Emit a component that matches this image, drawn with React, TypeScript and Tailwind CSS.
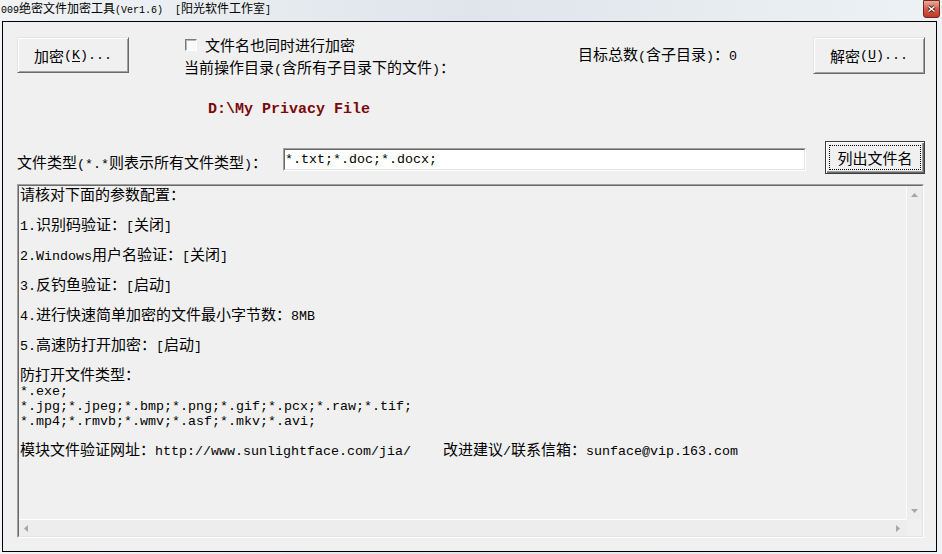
import React from "react";

// mixed CJK / half-width text: ASCII runs get a monospace face sized to half the CJK advance
function Mixed({ text, ascii = "text-[13.33px]" }: { text: string; ascii?: string }) {
  const parts = text.split(/([\x20-\x7e]+)/).filter(Boolean);
  return (
    <>
      {parts.map((p, i) =>
        /^[\x20-\x7e]+$/.test(p) ? (
          <span key={i} className={`font-['Liberation_Mono',monospace] whitespace-pre ${ascii}`}>
            {p}
          </span>
        ) : (
          <span key={i}>{p}</span>
        )
      )}
    </>
  );
}

function RaisedButton({ className, children }: { className: string; children: React.ReactNode }) {
  return (
    <button
      className={`flex items-center justify-center bg-[#f0f0f0] border border-t-[#e3e3e3] border-l-[#e3e3e3] border-r-[#696969] border-b-[#696969] shadow-[inset_1px_1px_0_#ffffff,inset_-1px_-1px_0_#a0a0a0] leading-[15px] text-black ${className}`}
    >
      {children}
    </button>
  );
}

function Sunken({ className, inner, children }: { className: string; inner: string; children: React.ReactNode }) {
  return (
    <div className={`border border-t-[#a0a0a0] border-l-[#a0a0a0] border-r-white border-b-white ${className}`}>
      <div className={`w-full h-full border border-t-[#696969] border-l-[#696969] border-r-[#e3e3e3] border-b-[#e3e3e3] ${inner}`}>
        {children}
      </div>
    </div>
  );
}

function Arrow({ dir }: { dir: "up" | "down" | "left" | "right" }) {
  const pts = {
    up: "0,4 3.5,0 7,4",
    down: "0,0 3.5,4 7,0",
    left: "4,0 0,3.5 4,7",
    right: "0,0 4,3.5 0,7",
  }[dir];
  const vertical = dir === "up" || dir === "down";
  return (
    <svg width={vertical ? 7 : 4} height={vertical ? 4 : 7} viewBox={vertical ? "0 0 7 4" : "0 0 4 7"}>
      <polygon points={pts} fill="#a6a6a6" />
    </svg>
  );
}

const lines = [
  "请核对下面的参数配置：",
  "",
  "1.识别码验证：[关闭]",
  "",
  "2.Windows用户名验证：[关闭]",
  "",
  "3.反钓鱼验证：[启动]",
  "",
  "4.进行快速简单加密的文件最小字节数：8MB",
  "",
  "5.高速防打开加密：[启动]",
  "",
  "防打开文件类型：",
  "*.exe;",
  "*.jpg;*.jpeg;*.bmp;*.png;*.gif;*.pcx;*.raw;*.tif;",
  "*.mp4;*.rmvb;*.wmv;*.asf;*.mkv;*.avi;",
  "",
  "模块文件验证网址：http://www.sunlightface.com/jia/    改进建议/联系信箱：sunface@vip.163.com",
];

export default function App() {
  return (
    <div className="w-[942px] h-[554px] overflow-hidden flex flex-col bg-linear-to-r from-[#f1f3f6] via-[#dfe5eb] to-[#eef2f5] font-['Noto_Sans_CJK_SC',sans-serif] text-[15px] text-black">
      {/* title bar */}
      <div className="h-[21px] flex items-start">
        <div className="ml-[1px] mt-[2px] text-[12px] leading-[12px]">
          <Mixed text="009绝密文件加密工具(Ver1.6)  [阳光软件工作室]" ascii="text-[10px]" />
        </div>
        <div className="ml-auto mr-[2px] w-[17px] h-[18px] rounded-b-[3px] border border-[#6d2a20] bg-linear-to-b from-[#eba99a] via-[#d45b45] to-[#c0392b] flex items-center justify-center">
          <svg width="9" height="8" viewBox="0 0 9 8">
            <path d="M1.5 1.5 L7.5 6.5 M7.5 1.5 L1.5 6.5" stroke="#4a1a12" strokeWidth="3" />
            <path d="M1.5 1.5 L7.5 6.5 M7.5 1.5 L1.5 6.5" stroke="#ffffff" strokeWidth="1.5" />
          </svg>
        </div>
      </div>

      {/* client area */}
      <div className="ml-[2px] w-[935px] h-[531px] border border-black bg-[#f0f0f0] pl-[14px] pt-[15px]">
        <div className="flex items-start">
          <RaisedButton className="w-[112px] h-[36px]">
            <Mixed text="加密(" />
            <span className="font-['Liberation_Mono',monospace] text-[13.33px] underline underline-offset-2">K</span>
            <Mixed text=")..." />
          </RaisedButton>

          <div className="ml-[55px] w-[394px] flex flex-col">
            <div className="h-[15px] flex items-center">
              <span className="ml-[1px] w-[12px] h-[12px] border border-t-[#7a7a7a] border-l-[#7a7a7a] border-r-white border-b-white bg-[#fafafa] shadow-[inset_1px_1px_0_#b8b8b8]" />
              <span className="ml-[8px] leading-[15px]">文件名也同时进行加密</span>
            </div>
            <div className="mt-[7px] h-[15px] leading-[15px] whitespace-nowrap">
              <Mixed text="当前操作目录(含所有子目录下的文件)：" />
            </div>
          </div>

          <div className="mt-[9px] w-[235px] h-[15px] leading-[15px] whitespace-nowrap">
            <Mixed text="目标总数(含子目录)：0" />
          </div>

          <RaisedButton className="w-[112px] h-[37px]">
            <Mixed text="解密(" />
            <span className="font-['Liberation_Mono',monospace] text-[13.33px] underline underline-offset-2">U</span>
            <Mixed text=")..." />
          </RaisedButton>
        </div>

        <div className="ml-[191px] mt-[28px] h-[16px] leading-[16px] font-['Liberation_Mono',monospace] font-bold text-[15px] text-[#7a0a0a]">
          {"D:\\My Privacy File"}
        </div>

        <div className="mt-[23px] flex items-start">
          <div className="mt-[13px] w-[266px] h-[15px] leading-[15px] whitespace-nowrap">
            <Mixed text="文件类型(*.*则表示所有文件类型)：" />
          </div>
          <Sunken className="mt-[7px] w-[523px] h-[23px]" inner="bg-white flex items-center">
            <span className="font-['Liberation_Mono',monospace] text-[13.33px] leading-[15px]">*.txt;*.doc;*.docx;</span>
          </Sunken>
          <button className="ml-[19px] w-[100px] h-[33px] flex items-center justify-center bg-[#f0f0f0] border border-[#3c3c3c] shadow-[inset_1px_1px_0_#ffffff,inset_-1px_-1px_0_#696969,inset_-2px_-2px_0_#a0a0a0] outline-1 outline-dotted outline-black outline-offset-[-5px] leading-[15px]">
            列出文件名
          </button>
        </div>

        <Sunken className="mt-[10px] w-[907px] h-[354px]" inner="flex flex-col bg-[#f0f0f0]">
          <div className="h-[333px] flex">
            <div className="flex-1 pl-[1px]">
              {lines.map((l, i) => (
                <div key={i} className="h-[15px] leading-[15px] whitespace-pre">
                  <Mixed text={l} />
                </div>
              ))}
            </div>
            <div className="w-[16px] flex flex-col justify-between border-l border-l-[#fafafa] bg-[#ededed]">
              <div className="h-[17px] flex items-center justify-center">
                <Arrow dir="up" />
              </div>
              <div className="h-[17px] flex items-center justify-center">
                <Arrow dir="down" />
              </div>
            </div>
          </div>
          <div className="h-[17px] flex">
            <div className="flex-1 flex justify-between border-t border-t-white bg-[#ededed]">
              <div className="w-[13px] flex items-center justify-center">
                <Arrow dir="left" />
              </div>
              <div className="w-[17px] flex items-center justify-center">
                <Arrow dir="right" />
              </div>
            </div>
            <div className="w-[16px] bg-[#f0f0f0]" />
          </div>
        </Sunken>
      </div>
    </div>
  );
}
